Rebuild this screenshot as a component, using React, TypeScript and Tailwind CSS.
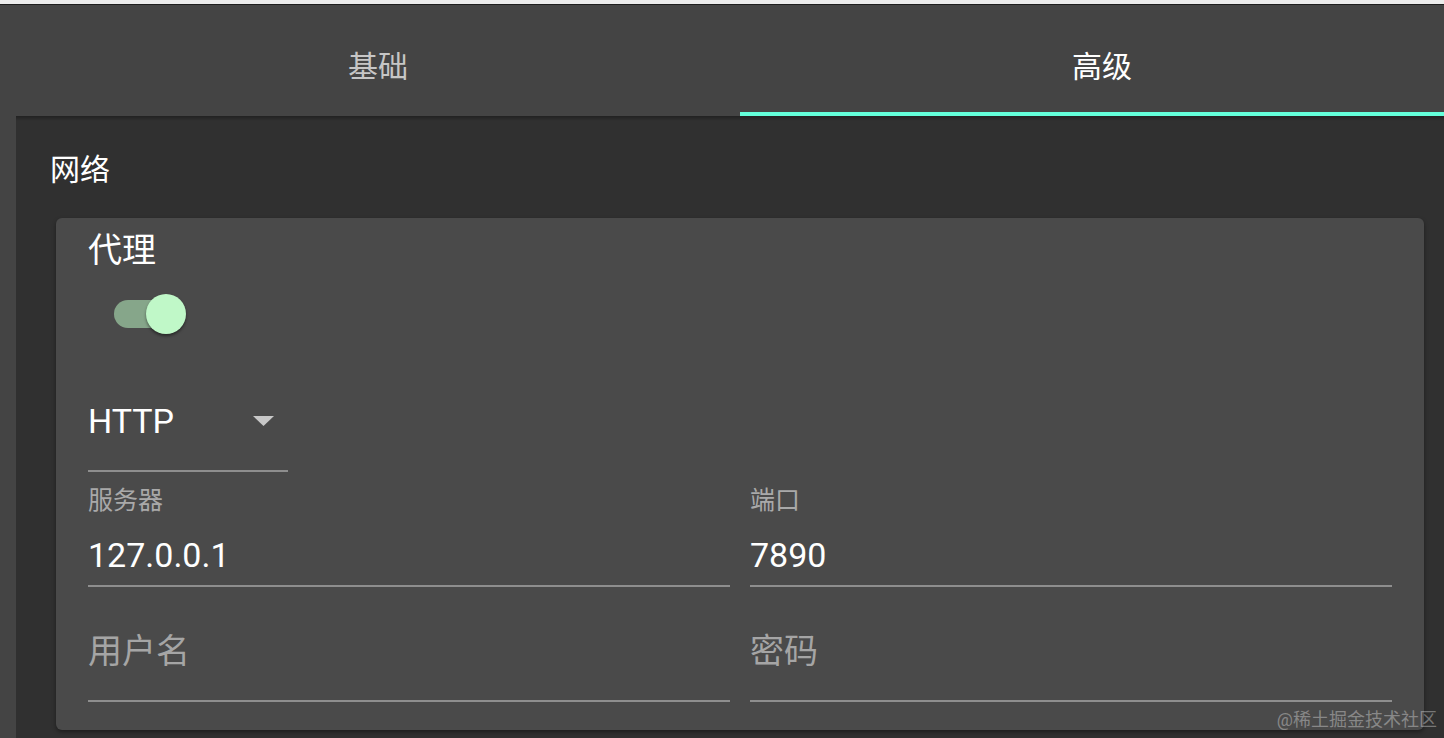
import React from "react";

const font = { fontFamily: "Roboto, 'Noto Sans CJK SC', sans-serif" };

function Field({ label, value }: { label: string; value: string }) {
  return (
    <div className="flex flex-col">
      <div className="h-[30px] text-[25px] leading-[30px] text-[#a9a9a9]">{label}</div>
      <div className="mt-[19px] h-[40px] text-[34px] leading-[40px] text-white">{value}</div>
      <div className="mt-[10px] h-[2px] bg-[#8e8e8e]" />
    </div>
  );
}

function EmptyField({ placeholder }: { placeholder: string }) {
  return (
    <div className="flex flex-col">
      <div className="mt-[44px] h-[40px] text-[34px] leading-[40px] text-[#a5a5a5]">{placeholder}</div>
      <div className="mt-[29px] h-[2px] bg-[#8e8e8e]" />
    </div>
  );
}

export default function App() {
  return (
    <div className="relative w-[1444px] h-[738px] overflow-hidden bg-[#444444]" style={font}>
      <div className="h-[4px] bg-[#ececec]" />
      <div className="h-px bg-[#1e1e1e]" />
      <div className="ml-[16px] w-[1448px] h-[733px] flex flex-col">
        <div className="h-[111px] flex bg-[#444444]">
          <div className="flex-1 flex items-center justify-center pt-[11px] text-[30px] text-[#c6c6c6]">基础</div>
          <div className="relative flex-1 flex items-center justify-center pt-[11px] text-[30px] text-white">
            高级
            <div className="absolute left-0 right-0 bottom-0 h-[4px] bg-[#64ffda]" />
          </div>
        </div>
        <div className="relative flex-1 bg-[#303030]">
          <div className="absolute left-0 right-0 top-0 h-[5px] bg-gradient-to-b from-[rgba(0,0,0,0.3)] to-transparent" />
          <div className="pl-[34px] pt-[36px] h-[72px] text-[30px] leading-[36px] text-white">网络</div>
          <div className="mx-[40px] mt-[30px] rounded-[6px] bg-[#4a4a4a] shadow-[0_2px_4px_rgba(0,0,0,0.4)] px-[32px] pt-[12px] pb-[28px]">
            <div className="h-[40px] text-[34px] leading-[40px] text-white">代理</div>
            <div className="relative mt-[24px] ml-[26px] w-[68px] h-[40px]">
              <div className="absolute left-0 top-[6px] w-[68px] h-[28px] rounded-full bg-[#86a68a]" />
              <div className="absolute left-[32px] top-0 w-[40px] h-[40px] rounded-full bg-[#c0f8c8] shadow-[0_2px_3px_rgba(0,0,0,0.45)]" />
            </div>
            <div className="mt-[67px] w-[200px]">
              <div className="h-[40px] flex items-center justify-between pr-[14px]">
                <span className="text-[34px] leading-[40px] text-white">HTTP</span>
                <svg width="21" height="10" viewBox="0 0 21 10">
                  <path d="M0 0 L21 0 L10.5 10 Z" fill="#c8c8c8" />
                </svg>
              </div>
              <div className="mt-[29px] h-[2px] bg-[#8e8e8e]" />
            </div>
            <div className="mt-[14px] grid grid-cols-2 gap-x-[20px]">
              <Field label="服务器" value="127.0.0.1" />
              <Field label="端口" value="7890" />
              <EmptyField placeholder="用户名" />
              <EmptyField placeholder="密码" />
            </div>
          </div>
        </div>
      </div>
      <div className="absolute right-[7px] top-[708px] text-[18px] leading-[24px] text-[rgba(255,255,255,0.35)]">
        @稀土掘金技术社区
      </div>
    </div>
  );
}
